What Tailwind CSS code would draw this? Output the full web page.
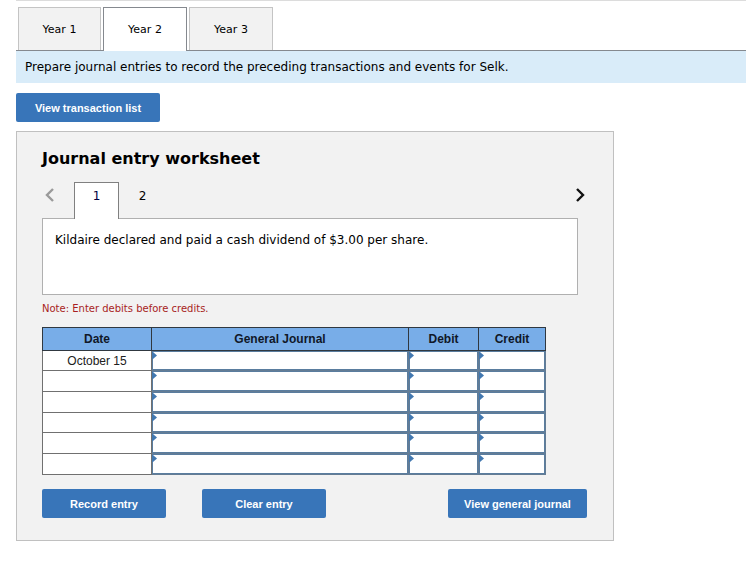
<!DOCTYPE html>
<html lang="en">
<head>
    <meta charset="UTF-8">
    <meta name="viewport" content="width=device-width, initial-scale=1.0">
    <title>Journal entry worksheet</title>
    <script src="https://cdn.jsdelivr.net/npm/@tailwindcss/browser@4"></script>
</head>
<body class="bg-white text-black font-['DejaVu_Sans',Verdana,sans-serif] text-[12px] leading-4">
    <div class="ml-4 border-t border-[#dcdcdc]">
        <!-- Year tabs -->
        <nav class="flex gap-[2px] pt-[6px] pl-[2px] border-b border-[#85898f] text-[11px]">
            <button class="w-[83px] h-[43px] pt-px bg-[#f2f2f2] border border-b-0 border-[#c4c4c4]">Year 1</button>
            <button class="w-[84px] h-[44px] -mb-px bg-white border border-b-0 border-[#85898f]">Year 2</button>
            <button class="w-[84px] h-[43px] pt-px bg-[#f2f2f2] border border-b-0 border-[#c4c4c4]">Year 3</button>
        </nav>
        <p class="bg-[#d9ecf9] px-[9px] py-2">Prepare journal entries to record the preceding transactions and events for Selk.</p>
    </div>

    <div class="px-4 pt-[10px]">
        <button class="h-[29px] w-36 rounded-[2px] bg-[#3875b9] text-white font-['Liberation_Sans',Arial,sans-serif] text-[11px] font-bold">View transaction list</button>

        <main class="max-w-[598px] mt-[9px] mb-6 bg-[#f2f2f2] border border-[#c0c0c0] px-[25px] pt-[17px] pb-[22px]">
            <h1 class="text-[16px] leading-5 font-bold">Journal entry worksheet</h1>

            <!-- Entry tabs -->
            <div class="flex max-w-[545px] mt-[13px]">
                <button class="flex items-center w-8 h-[26px] pl-[2px]" aria-label="Previous entry">
                    <svg class="w-3 h-4" viewBox="0 0 12 16" fill="none" stroke="#9a9a9a" stroke-width="2.4"><path d="M9 2 3 8l6 6"/></svg>
                </button>
                <button class="w-[45px] h-[37px] -mb-px pb-[10px] bg-white border border-b-0 border-[#808080] text-[#000040]">1</button>
                <button class="w-[47px] h-[27px]">2</button>
                <button class="flex items-center justify-end ml-auto w-6 h-[26px]" aria-label="Next entry">
                    <svg class="w-3 h-4" viewBox="0 0 12 16" fill="none" stroke="#111" stroke-width="2.4"><path d="M2 2l6 6-6 6"/></svg>
                </button>
            </div>
            <div class="max-w-[536px] min-h-[77px] bg-white border border-[#b0b0b0] px-3 py-[13px]">Kildaire declared and paid a cash dividend of $3.00 per share.</div>

            <p class="mt-[6px] text-[10px] leading-4 text-[#a81e22]">Note: Enter debits before credits.</p>

            <table class="mt-[10px] w-full max-w-[504px] table-fixed border-collapse bg-white font-['Liberation_Sans',Arial,sans-serif] text-center">
                <colgroup>
                    <col class="w-[109px]">
                    <col>
                    <col class="w-[70px]">
                    <col class="w-[67px]">
                </colgroup>
                <thead class="bg-[#78ade8] text-[#101828]">
                    <tr>
                        <th scope="col" class="h-[23px] p-0 border border-[#303840]">Date</th>
                        <th scope="col" class="p-0 border border-[#303840]">General Journal</th>
                        <th scope="col" class="p-0 border border-[#303840]">Debit</th>
                        <th scope="col" class="p-0 border border-[#303840]">Credit</th>
                    </tr>
                </thead>
                <tbody id="journalRows"></tbody>
            </table>

            <div class="flex mt-[14px] max-w-[545px] text-white font-['Liberation_Sans',Arial,sans-serif] text-[11px] font-bold">
                <button class="h-[29px] w-31 rounded-[2px] bg-[#3875b9]">Record entry</button>
                <button class="ml-9 h-[29px] w-31 rounded-[2px] bg-[#3875b9]">Clear entry</button>
                <button class="ml-auto h-[29px] w-[139px] rounded-[2px] bg-[#3875b9]">View general journal</button>
            </div>
        </main>
    </div>

    <script>
        let journalRows = document.getElementById('journalRows')
        const dates = ['October 15', '', '', '', '', ''];
        const columns = ['General Journal', 'Debit', 'Credit'];

        // One editable cell with the small marker in its corner
        function entryCell(column, line, height) {
            return `
                <td class="relative p-0 border border-[#647c94]">
                    <input type="text" aria-label="${column}, line ${line}" class="block w-full ${height} px-2 border border-[#5a7d9f] bg-white outline-none">
                    <svg class="absolute left-0 top-px w-[5px] h-[7px]" viewBox="0 0 5 7"><path d="M0 0h1l4 3.5L1 7H0z" fill="#4278b0"/></svg>
                </td>
            `;
        }

        dates.forEach((date, i) => {
            const height = i % 3 === 0 ? 'h-[19px]' : 'h-[20px]';
            const row = document.createElement('tr');
            row.innerHTML = `<td class="p-0 border border-[#707070] text-[#202020]">${date}</td>`
                + columns.map((column) => entryCell(column, i + 1, height)).join('');
            journalRows.appendChild(row)
        });
    </script>
</body>
</html>
